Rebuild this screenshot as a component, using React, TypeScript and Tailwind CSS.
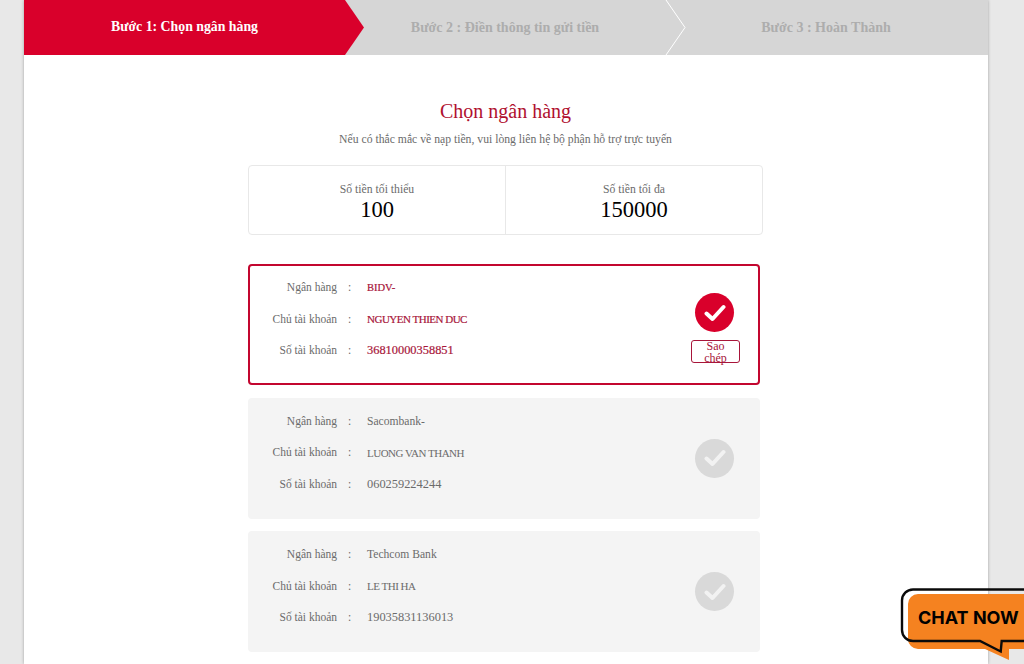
const BANKS = [
  { bank: "BIDV-", owner: "NGUYEN THIEN DUC", number: "36810000358851", active: true },
  { bank: "Sacombank-", owner: "LUONG VAN THANH", number: "060259224244", active: false },
  { bank: "Techcom Bank", owner: "LE THI HA", number: "19035831136013", active: false },
];

function CheckBadge({ active }: { active: boolean }) {
  return (
    <div className={`mr-[2px] flex h-[39px] w-[39px] items-center justify-center rounded-full ${active ? "bg-[#d9002b]" : "bg-[#d9d9d9]"}`}>
      <svg width="22" height="18" viewBox="0 0 22 18" fill="none">
        <path d="M2.5 9.5L8.5 15L19.5 3" stroke={active ? "#ffffff" : "#f2f2f2"} strokeWidth="4" strokeLinecap="round" strokeLinejoin="round" />
      </svg>
    </div>
  );
}

function Row({ label, value, size, active }: { label: string; value: string; size: string; active: boolean }) {
  return (
    <div className="flex h-[31.5px] items-center text-[11.5px] text-[#6b6b6b]">
      <span className="w-[87px] text-right">{label}</span>
      <span className="w-[30px] pl-[11px]">:</span>
      <span className={`${size} ${active ? "text-[#a8153a] [-webkit-text-stroke:0.2px_#a8153a]" : ""}`}>{value}</span>
    </div>
  );
}

function BankCard({ bank, owner, number, active }: { bank: string; owner: string; number: string; active: boolean }) {
  return (
    <div
      className={`flex h-[121px] w-[512px] items-center justify-between rounded-[4px] border-2 pr-[18px] ${
        active ? "border-[#c3062f] bg-white" : "border-transparent bg-[#f4f4f4]"
      }`}
    >
      <div className="flex flex-col self-start pt-[6px]">
        <Row label="Ngân hàng" value={bank} size={bank === "BIDV-" ? "text-[10.5px]" : "text-[11.6px]"} active={active} />
        <Row label="Chủ tài khoản" value={owner} size="text-[11px] tracking-[-0.5px]" active={active} />
        <Row label="Số tài khoản" value={number} size="text-[12.4px]" active={active} />
      </div>
      <div className={`flex w-[49px] flex-col items-center ${active ? "mt-[7px]" : ""}`}>
        <CheckBadge active={active} />
        {active && (
          <button className="mt-[8px] h-[23px] w-[49px] rounded-[3px] border border-[#a8153a] px-2 text-center text-[12px] leading-[11.5px] text-[#a8153a]">
            Sao chép
          </button>
        )}
      </div>
    </div>
  );
}

export default function App() {
  return (
    <div className="relative h-[664px] w-[1024px] overflow-hidden bg-[#e8e8e8] font-['Liberation_Serif',serif]">
      <div className="ml-[24px] h-full w-[964px] bg-white shadow-[0_0_3px_rgba(0,0,0,0.3)]">
        {/* Stepper */}
        <div className="relative flex h-[55px] bg-[#d6d6d6] text-[14px] font-bold">
          <div className="flex w-[340px] items-center justify-center bg-[#d9002b] pr-[19px] text-[13.8px] text-white [clip-path:polygon(0_0,321px_0,340px_27.5px,321px_55px,0_55px)]">
            Bước 1: Chọn ngân hàng
          </div>
          <div className="flex w-[300px] items-center justify-center pr-[18px] text-[#adadad]">
            Bước 2 : Điền thông tin gửi tiền
          </div>
          <svg className="absolute left-[640px] top-0" width="24" height="55" viewBox="0 0 24 55" fill="none">
            <path d="M2 0L21 27.5L2 55" stroke="#ffffff" strokeWidth="1" />
          </svg>
          <div className="flex flex-1 items-center justify-center text-[#adadad]">
            Bước 3 : Hoàn Thành
          </div>
        </div>

        <div className="ml-[224px] w-[515px] pt-[43px]">
          <h1 className="text-center text-[20px] leading-[26px] text-[#b0102f]">Chọn ngân hàng</h1>
          <p className="mt-[8px] text-center text-[11.7px] leading-[16px] text-[#6b6b6b]">
            Nếu có thắc mắc về nạp tiền, vui lòng liên hệ bộ phận hỗ trợ trực tuyến
          </p>

          <div className="mt-[17px] flex h-[70px] rounded-[4px] border border-[#e8e8e8]">
            <div className="flex flex-1 flex-col items-center justify-center border-r border-[#e8e8e8] pt-[4px]">
              <span className="text-[11.7px] leading-[16px] text-[#6b6b6b]">Số tiền tối thiểu</span>
              <span className="text-[22.5px] leading-[24px] text-black">100</span>
            </div>
            <div className="flex flex-1 flex-col items-center justify-center pt-[4px]">
              <span className="text-[11.7px] leading-[16px] text-[#6b6b6b]">Số tiền tối đa</span>
              <span className="text-[22.5px] leading-[24px] text-black">150000</span>
            </div>
          </div>

          <div className="mt-[29px] flex flex-col gap-[12.5px]">
            {BANKS.map((b) => (
              <BankCard key={b.bank} {...b} />
            ))}
          </div>
        </div>
      </div>

      {/* Chat bubble */}
      <div className="absolute left-[900px] top-[588px] h-[76px] w-[124px]">
        <svg className="absolute inset-0" width="124" height="76" viewBox="0 0 124 76" fill="none">
          <path d="M18 6H130V61H109V72L85 61H18a10 10 0 0 1-10-10V16a10 10 0 0 1 10-10Z" fill="#f58220" />
          <path d="M130 1.5H13a11 11 0 0 0-11 11V42a11 11 0 0 0 11 11H80L100.7 63.5L101.7 53H130" stroke="#0a0a0a" strokeWidth="2.4" />
        </svg>
        <span className="absolute left-[18px] top-[19px] whitespace-nowrap font-['Inter',sans-serif] text-[18px] font-bold leading-[22px] text-black">
          CHAT NOW
        </span>
      </div>
    </div>
  );
}
